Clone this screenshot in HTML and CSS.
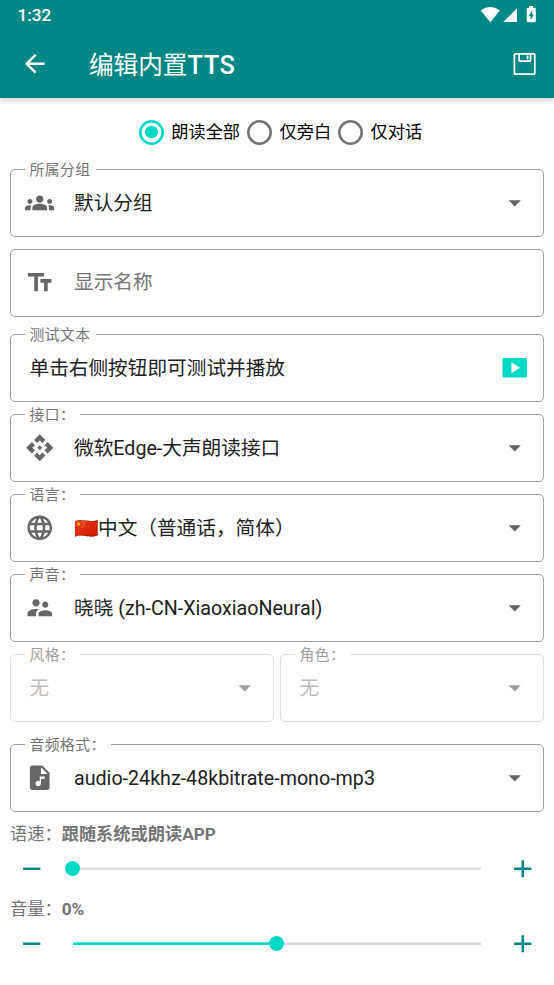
FILE: index.html
```html
<!DOCTYPE html>
<html lang="zh-CN">
<head>
<meta charset="utf-8">
<title>编辑内置TTS</title>
<link rel="stylesheet" href="styles.css">
</head>
<body>
<header class="header">
  <div class="status">
    <span class="clock">1:32</span>
    <svg class="status-icons" width="60" height="20" viewBox="0 0 60 20" fill="#fff">
      <path d="M2.800 5.400Q12.300-1.200 21.800 5.400L12.300 17.200Z"/>
      <path d="M39 3.200V17.100H25.200Z"/>
      <path fill-rule="evenodd" d="M51 1h4v1.800h1.600q1.200 0 1.200 1.200v12q0 1.200-1.200 1.200h-6.700q-1.200 0-1.200-1.200V4q0-1.200 1.200-1.200H51ZM54.200 5.500l-3.600 5.500h2v4l3.400-5.500h-1.800Z"/>
    </svg>
  </div>
  <div class="toolbar">
    <svg class="icon back" viewBox="0 0 24 24"><path d="M20 11H7.830l5.590-5.590L12 4l-8 8 8 8 1.410-1.410L7.830 13H20z"/></svg>
    <h1 class="title">编辑内置<span class="latin">TTS</span></h1>
    <svg class="save" width="24" height="24" viewBox="0 0 24 24" fill="none" stroke="#fff" stroke-width="1.700">
      <rect x="1.400" y="1.800" width="20.400" height="20.400" rx="1"/>
      <path d="M6.100 2v6.200q0 1 1 1h9.400q1 0 1-1V2M14.500 3.500v4"/>
    </svg>
  </div>
</header>

<main class="content">
  <div class="radios">
    <label class="radio on"><span class="ring"></span>朗读全部</label>
    <label class="radio"><span class="ring"></span>仅旁白</label>
    <label class="radio"><span class="ring"></span>仅对话</label>
  </div>

  <div class="field">
    <span class="label">所属分组</span>
    <svg class="icon lead" viewBox="0 0 24 24"><path d="M12 12.750c1.630 0 3.070.390 4.240.900 1.080.480 1.760 1.560 1.760 2.730V18H6v-1.610c0-1.180.680-2.260 1.760-2.730 1.170-.520 2.610-.910 4.240-.910zM4 13c1.100 0 2-.900 2-2s-.900-2-2-2-2 .900-2 2 .900 2 2 2zm1.130 1.100C4.760 14.040 4.390 14 4 14c-.990 0-1.930.210-2.780.580C.480 14.900 0 15.620 0 16.430V18h4.500v-1.610c0-.830.230-1.610.630-2.290zM20 13c1.100 0 2-.900 2-2s-.900-2-2-2-2 .900-2 2 .900 2 2 2zm4 3.430c0-.810-.480-1.530-1.220-1.850C21.930 14.210 20.990 14 20 14c-.390 0-.760.040-1.130.100.400.680.630 1.460.630 2.290V18H24v-1.570zM12 6c1.660 0 3 1.340 3 3s-1.340 3-3 3-3-1.340-3-3 1.340-3 3-3z"/></svg>
    <span class="value">默认分组</span>
    <svg class="icon arrow" viewBox="0 0 24 24"><path d="M7 10l5 5 5-5z"/></svg>
  </div>

  <div class="field">
    <svg class="icon lead" viewBox="0 0 24 24"><path d="M2.500 4v3h5v12h3V7h5V4zM21.500 9h-9v3h3v7h3v-7h3z"/></svg>
    <span class="value hint">显示名称</span>
  </div>

  <div class="field plain test">
    <span class="label">测试文本</span>
    <span class="value">单击右侧按钮即可测试并播放</span>
    <svg class="icon play" viewBox="0 0 24 24"><path fill-rule="evenodd" d="M3.200 4h17.600Q22 4 22 5.200v13.600q0 1.200-1.200 1.200H3.200Q2 20 2 18.800V5.200Q2 4 3.200 4zM9.300 7.500v9l7-4.500z"/></svg>
  </div>

  <div class="field">
    <span class="label">接口：</span>
    <svg class="icon lead" viewBox="0 0 24 24"><path d="M14 12l-2 2-2-2 2-2zM12 6l2.120 2.120 2.500-2.500L12 1 7.380 5.620l2.500 2.500zM6 12l2.120-2.120-2.500-2.500L1 12l4.620 4.620 2.500-2.500zM18 12l-2.120 2.120 2.500 2.500L23 12l-4.620-4.620-2.500 2.500zM12 18l-2.120-2.120-2.500 2.500L12 23l4.620-4.620-2.500-2.500z"/></svg>
    <span class="value">微软Edge-大声朗读接口</span>
    <svg class="icon arrow" viewBox="0 0 24 24"><path d="M7 10l5 5 5-5z"/></svg>
  </div>

  <div class="field">
    <span class="label">语言：</span>
    <svg class="icon lead" viewBox="0 0 24 24"><path d="M11.990 2C6.470 2 2 6.480 2 12s4.470 10 9.990 10C17.520 22 22 17.520 22 12S17.520 2 11.990 2zm6.930 6h-2.950c-.320-1.250-.780-2.450-1.380-3.560 1.840.630 3.370 1.910 4.330 3.560zM12 4.040c.830 1.200 1.480 2.530 1.910 3.960h-3.820c.430-1.430 1.080-2.760 1.910-3.960zM4.260 14C4.100 13.360 4 12.690 4 12s.100-1.360.260-2h3.380c-.080.660-.140 1.320-.140 2s.060 1.340.140 2H4.260zm.820 2h2.950c.320 1.250.780 2.450 1.380 3.560-1.840-.630-3.370-1.900-4.330-3.560zm2.950-8H5.080c.960-1.660 2.490-2.930 4.330-3.560C8.810 5.550 8.350 6.750 8.030 8zM12 19.960c-.830-1.200-1.480-2.530-1.910-3.960h3.820c-.430 1.430-1.080 2.760-1.910 3.960zM14.340 14H9.660c-.090-.660-.160-1.320-.160-2s.070-1.350.160-2h4.680c.090.650.160 1.320.160 2s-.070 1.340-.160 2zm.250 5.560c.600-1.110 1.060-2.310 1.380-3.560h2.950c-.960 1.650-2.490 2.930-4.330 3.560zM16.360 14c.080-.660.140-1.320.140-2s-.060-1.340-.140-2h3.380c.160.640.260 1.310.260 2s-.100 1.360-.260 2h-3.380z"/></svg>
    <span class="value">🇨🇳中文（普通话，简体）</span>
    <svg class="icon arrow" viewBox="0 0 24 24"><path d="M7 10l5 5 5-5z"/></svg>
  </div>

  <div class="field">
    <span class="label">声音：</span>
    <svg class="icon lead" viewBox="0 0 24 24"><path d="M16.500 12c1.380 0 2.490-1.120 2.490-2.500S17.880 7 16.500 7 14 8.120 14 9.500s1.120 2.500 2.500 2.500zM9 11c1.660 0 2.990-1.340 2.990-3S10.660 5 9 5 6 6.340 6 8s1.340 3 3 3zm7.500 3c-1.830 0-5.500.920-5.500 2.750V19h11v-2.250c0-1.830-3.670-2.750-5.500-2.750zM9 13c-2.330 0-7 1.170-7 3.500V19h7v-2.250c0-.850.330-2.340 2.370-3.470C10.500 13.100 9.660 13 9 13z"/></svg>
    <span class="value">晓晓 (zh-CN-XiaoxiaoNeural)</span>
    <svg class="icon arrow" viewBox="0 0 24 24"><path d="M7 10l5 5 5-5z"/></svg>
  </div>

  <div class="pair">
    <div class="field plain disabled">
      <span class="label">风格：</span>
      <span class="value">无</span>
      <svg class="icon arrow" viewBox="0 0 24 24"><path d="M7 10l5 5 5-5z"/></svg>
    </div>
    <div class="field plain disabled">
      <span class="label">角色：</span>
      <span class="value">无</span>
      <svg class="icon arrow" viewBox="0 0 24 24"><path d="M7 10l5 5 5-5z"/></svg>
    </div>
  </div>

  <div class="field format">
    <span class="label">音频格式：</span>
    <svg class="icon lead" viewBox="0 0 24 24"><path fill-rule="evenodd" d="M14 2H6c-1.100 0-2 .900-2 2v16c0 1.100.900 2 2 2h12c1.100 0 2-.900 2-2V8zM16 13h-3v3.750c0 1.240-1.010 2.250-2.250 2.250S8.500 17.990 8.500 16.750s1.010-2.250 2.250-2.250c.460 0 .890.140 1.250.380V11h4zM13 9V3.500L18.500 9z"/></svg>
    <span class="value">audio-24khz-48kbitrate-mono-mp3</span>
    <svg class="icon arrow" viewBox="0 0 24 24"><path d="M7 10l5 5 5-5z"/></svg>
  </div>

  <section class="setting">
    <div class="caption">语速：<b>跟随系统或朗读APP</b></div>
    <div class="slider">
      <svg class="icon" viewBox="0 0 24 24"><path d="M19 13H5v-2h14z"/></svg>
      <div class="track"><div class="fill" style="width:0%"></div><div class="thumb"></div></div>
      <svg class="icon" viewBox="0 0 24 24"><path d="M19 13h-6v6h-2v-6H5v-2h6V5h2v6h6z"/></svg>
    </div>
  </section>
  <section class="setting">
    <div class="caption">音量：<b>0%</b></div>
    <div class="slider">
      <svg class="icon" viewBox="0 0 24 24"><path d="M19 13H5v-2h14z"/></svg>
      <div class="track"><div class="fill" style="width:50%"></div><div class="thumb"></div></div>
      <svg class="icon" viewBox="0 0 24 24"><path d="M19 13h-6v6h-2v-6H5v-2h6V5h2v6h6z"/></svg>
    </div>
  </section>
</main>
</body>
</html>
```
FILE: styles.css
```css
* { box-sizing: border-box; }

body {
  margin: 0;
  height: 985px;
  overflow: hidden;
  background: #fff;
  color: #212121;
  font-family: Roboto, "Noto Sans CJK SC", sans-serif;
}

.icon {
  display: block;
  flex: none;
  width: 29.5px;
  height: 29.5px;
  fill: #666;
}

.header {
  height: 98px;
  background: #018786;
  color: #fff;
  box-shadow: 0 1px 5px rgba(0, 0, 0, .25);
}

.status {
  display: flex;
  justify-content: space-between;
  height: 30px;
  padding: 5px 17px 0 17.500px;
}

.clock {
  font-size: 17.200px;
  font-weight: 500;
  line-height: 21px;
}

.status-icons { margin-right: -1px; }

.toolbar {
  display: flex;
  align-items: center;
  height: 68px;
  padding: 0 17px 0 19.500px;
}

.back { fill: #fff; }

.title {
  flex: 1;
  margin: 3px 0 0 40px;
  font-size: 24.600px;
  font-weight: 400;
  line-height: 34px;
}

.latin {
  font-weight: 500;
  letter-spacing: .6px;
  font-size: 25.400px;
}

.content { padding: 14px 10px 0; }

.radios {
  display: flex;
  justify-content: center;
  height: 40px;
  margin-bottom: 17px;
}

.radio {
  display: flex;
  align-items: center;
  color: #000;
  font-size: 17.230px;
  line-height: 24px;
}

.ring {
  display: flex;
  align-items: center;
  justify-content: center;
  width: 25px;
  height: 25px;
  margin: 0 7.200px;
  border-radius: 50%;
  box-shadow: inset 0 0 0 2.600px #757575;
}

.on .ring { box-shadow: inset 0 0 0 2.600px #03dac5; }

.on .ring::after {
  content: "";
  width: 12.800px;
  height: 12.800px;
  border-radius: 50%;
  background: #03dac5;
}

.field {
  position: relative;
  display: flex;
  align-items: center;
  height: 68px;
  margin-bottom: 12px;
  padding: 0 14px 0 13.500px;
  border: 1px solid #9e9e9e;
  border-radius: 5px;
}

.plain { padding-left: 18.500px; }
.plain .value { margin-left: 0; }
.test { margin-top: 17px; }

.label {
  position: absolute;
  top: -10px;
  left: 14px;
  padding: 0 5px 0 4.500px;
  background: #fff;
  color: #757575;
  font-size: 14.770px;
  letter-spacing: .5px;
  line-height: 21px;
  white-space: nowrap;
}

.value {
  flex: 1;
  margin-left: 20px;
  padding-top: 2px;
  font-size: 19.670px;
  line-height: 28px;
  white-space: nowrap;
}

.hint {
  padding-top: 0;
  color: #757575;
}

.play { fill: #03dac5; }

.pair {
  display: flex;
  gap: 6px;
  margin-bottom: 22px;
}

.pair .field {
  flex: 1;
  margin: 0;
}

.disabled { border-color: #e0e0e0; }
.disabled .label { color: #9e9e9e; }
.disabled .value { color: #bdbdbd; }
.disabled .arrow { fill: #9e9e9e; }

.setting { height: 75px; }

.caption {
  height: 20px;
  color: #757575;
  font-size: 17.230px;
  line-height: 20px;
  white-space: nowrap;
}

.caption b { font-weight: 700; }

.slider {
  display: flex;
  align-items: center;
  height: 49px;
  padding: 0 7px;
}

.slider .icon { fill: #018786; }

.track {
  display: flex;
  align-items: center;
  flex: 1;
  height: 3px;
  margin: 0 26.500px 0 26px;
  background: linear-gradient(#e8e8e8 1px, #dcdcdc 1px);
}

.fill {
  height: 100%;
  background: linear-gradient(#5ce7da 1px, #03dac5 1px);
}

.thumb {
  flex: none;
  width: 15px;
  height: 15px;
  margin-left: -7.500px;
  border-radius: 50%;
  background: #03dac5;
}
```
